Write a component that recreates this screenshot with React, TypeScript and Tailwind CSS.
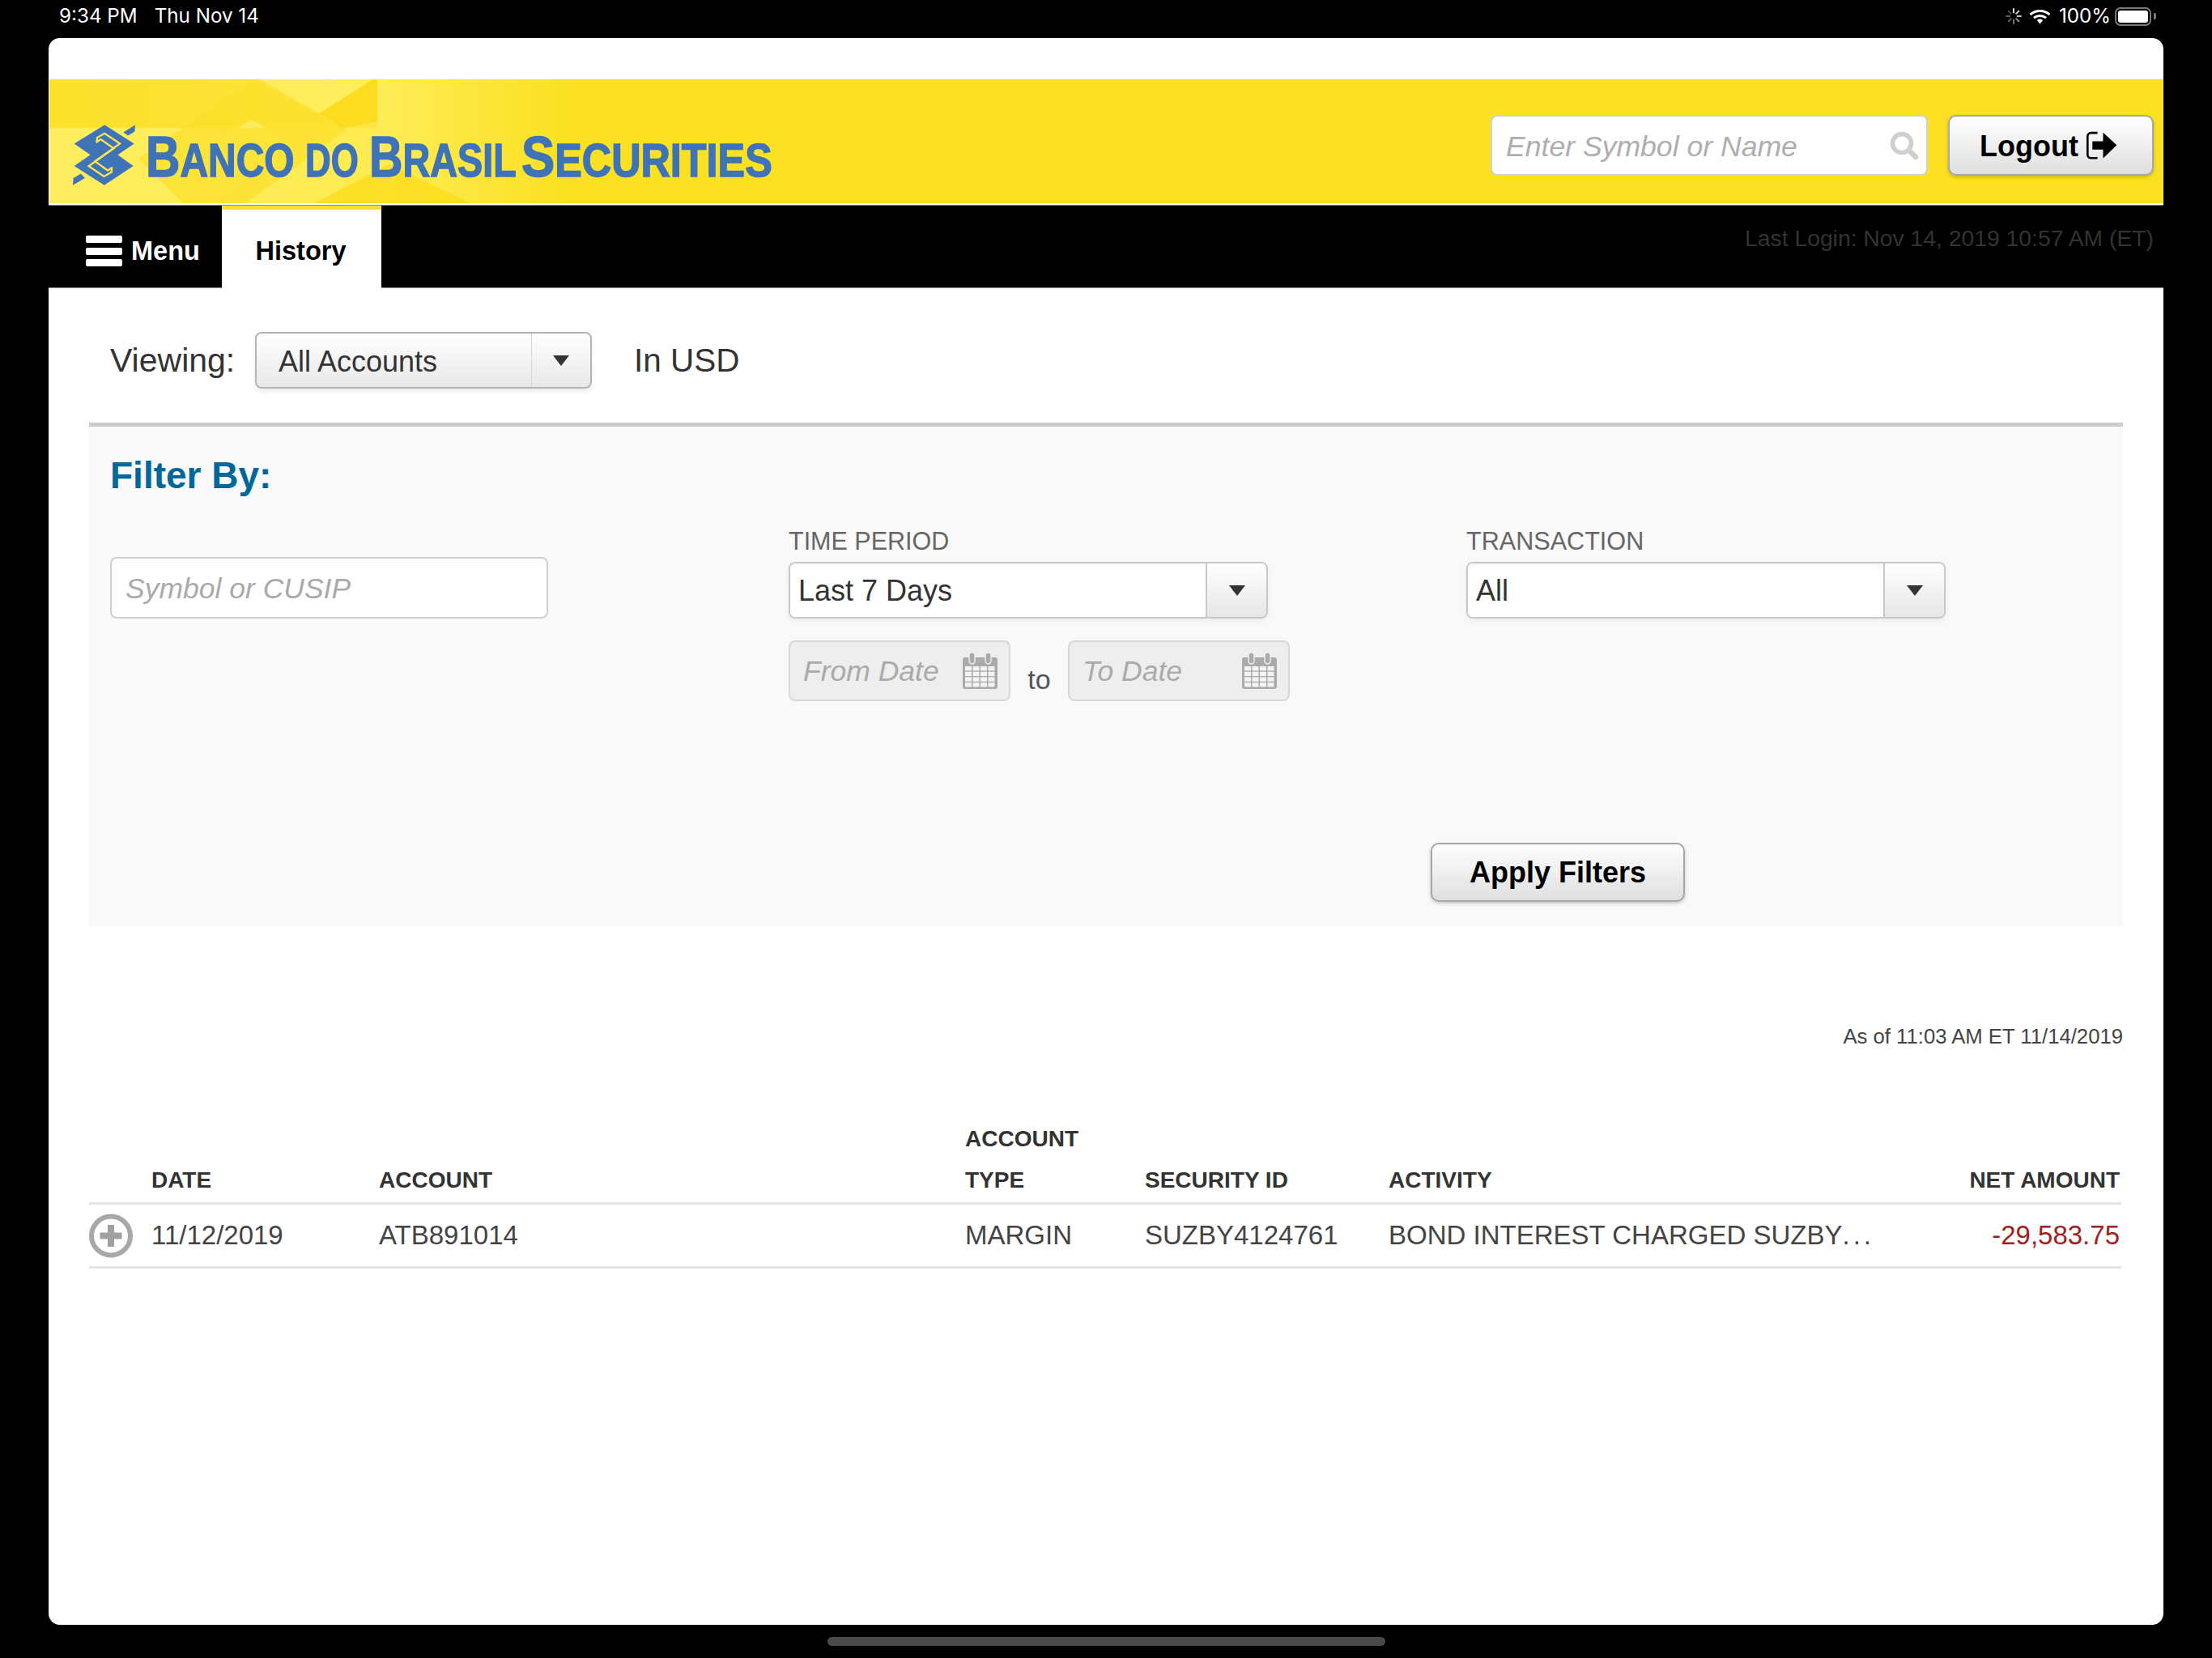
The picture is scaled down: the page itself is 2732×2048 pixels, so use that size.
import React from "react";

const Arrow = () => (
  <svg width="20" height="13" viewBox="0 0 20 13" className="block"><path d="M0 0H20L10 13Z" fill="#333" /></svg>
);

const Calendar = () => (
  <svg width="43" height="46" viewBox="0 0 43 46" className="block">
    <path d="M3 6H40a3 3 0 0 1 3 3V42a3 3 0 0 1-3 3H3a3 3 0 0 1-3-3V9a3 3 0 0 1 3-3Z" fill="#aaa" />
    <rect x="8" y="0" width="7" height="14" rx="3.5" fill="#aaa" stroke="#eee" strokeWidth="1.5" />
    <rect x="28" y="0" width="7" height="14" rx="3.5" fill="#aaa" stroke="#eee" strokeWidth="1.5" />
    {[0, 1, 2, 3].map((r) =>
      [0, 1, 2, 3].map((c) => (
        <rect key={`${r}-${c}`} x={3 + c * 9.5} y={17 + r * 6.7} width="8" height="5.4" fill="#f2f2f2" />
      ))
    )}
  </svg>
);

const Select = ({ value, w }: { value: string; w: string }) => (
  <div className={`flex h-[70px] ${w} rounded-[8px] border-2 border-[#c8c8c8] bg-white shadow-[0_3px_6px_rgba(0,0,0,0.06)] overflow-hidden`}>
    <div className="flex-1 pl-[10px] pt-[2px] flex items-center text-[36px] text-[#333] bg-linear-to-b from-[#f8f8f8] to-white to-[12%]">{value}</div>
    <div className="w-[75px] border-l-2 border-[#c8c8c8] flex items-center justify-center bg-linear-to-b from-white to-[#e6e6e6]">
      <Arrow />
    </div>
  </div>
);

const DateBox = ({ label, w }: { label: string; w: string }) => (
  <div className={`flex items-center justify-between h-[75px] ${w} rounded-[8px] border-2 border-[#d8d8d8] bg-[#eeeeee] pl-[16px] pr-[14px]`}>
    <span className="text-[35.5px] italic text-[#aaaaaa] pt-[3px]">{label}</span>
    <Calendar />
  </div>
);

const Word = ({ w, s, big, rest }: { w: string; s: string; big: string; rest: string }) => (
  <span className={`inline-block ${w} shrink-0`}>
    <span className={`inline-block origin-left ${s} whitespace-nowrap`}>
      <span className="text-[70px]">{big}</span>
      {rest}
    </span>
  </span>
);

const Th = ({ children, right }: { children: React.ReactNode; right?: boolean }) => (
  <div className={`text-[28px] font-bold leading-[51px] text-[#333] ${right ? "text-right" : ""}`}>{children}</div>
);

export default function App() {
  return (
    <div className="w-[2732px] h-[2048px] bg-black flex flex-col font-['Liberation_Sans','Arial',sans-serif] overflow-hidden">
      {/* status bar */}
      <div className="h-[47px] shrink-0 flex items-start justify-between pl-[73px] pr-[69px] text-white font-['Inter','Liberation_Sans',sans-serif] text-[24.2px] leading-[40px]">
        <div className="flex gap-[21px]">
          <span>9:34 PM</span>
          <span>Thu Nov 14</span>
        </div>
        <div className="flex items-center h-[40px]">
          <svg width="20" height="20" viewBox="0 0 20 20" className="block">
            <g stroke="#fff" strokeWidth="1.8" strokeLinecap="round">
              <path d="M10 1V5.5" opacity="1" />
              <path d="M16.4 3.6L13.2 6.8" opacity=".85" />
              <path d="M19 10H14.5" opacity=".75" />
              <path d="M16.4 16.4L13.2 13.2" opacity=".6" />
              <path d="M10 19V14.5" opacity=".5" />
              <path d="M3.6 16.4L6.8 13.2" opacity=".4" />
              <path d="M1 10H5.5" opacity=".35" />
              <path d="M3.6 3.6L6.8 6.8" opacity=".3" />
            </g>
          </svg>
          <svg width="27" height="20" viewBox="0 0 27 20" className="block ml-[9px]">
            <path d="M13.5 19.5l-3.7-4.6a6 6 0 0 1 7.4 0Z" fill="#fff" />
            <path d="M13.5 3.5A19 19 0 0 0 1.5 8" fill="none" stroke="#fff" strokeWidth="3" />
            <path d="M13.5 3.5A19 19 0 0 1 25.5 8" fill="none" stroke="#fff" strokeWidth="3" />
            <path d="M6 12.2a12 12 0 0 1 15 0" fill="none" stroke="#fff" strokeWidth="3" />
          </svg>
          <span className="ml-[10px] w-[62px]">100%</span>
          <div className="ml-[7px] w-[45px] h-[23px] rounded-[7px] border-2 border-[#7a7a7a] p-[2px]">
            <div className="w-full h-full rounded-[3px] bg-white" />
          </div>
          <div className="ml-[3px] w-[3px] h-[8px] rounded-r-[2px] bg-[#7a7a7a]" />
        </div>
      </div>

      {/* card */}
      <div className="h-[1960px] mx-[60px] shrink-0 bg-white rounded-[14px] overflow-hidden flex flex-col">
        <div className="h-[51px] shrink-0" />

        {/* banner */}
        <div className="relative h-[153px] shrink-0 ml-[1px] bg-[#fbe122] flex items-start pl-[29px] overflow-hidden">
          <svg className="absolute left-0 top-0" width="800" height="153" viewBox="0 0 800 153">
            <defs>
              <linearGradient id="low" x1="0" x2="1" y1="0" y2="0">
                <stop offset="0" stopColor="#fff06a" stopOpacity=".85" />
                <stop offset="1" stopColor="#fff06a" stopOpacity=".65" />
              </linearGradient>
              <linearGradient id="right" x1="0" x2="1" y1="0" y2="0">
                <stop offset="0" stopColor="#fff06a" stopOpacity=".75" />
                <stop offset="1" stopColor="#fff06a" stopOpacity="0" />
              </linearGradient>
              <linearGradient id="top" x1="0" x2="1" y1="0" y2="0">
                <stop offset="0" stopColor="#fce02a" />
                <stop offset="1" stopColor="#fde53f" />
              </linearGradient>
            </defs>
            <rect x="0" y="0" width="405" height="60" fill="url(#top)" />
            <rect x="0" y="60" width="405" height="93" fill="url(#low)" />
            <rect x="405" y="0" width="230" height="153" fill="url(#right)" />
            <path d="M260 0H400L333 42Z" fill="#fff06a" opacity=".75" />
            <path d="M400 0H405V52L363 60 333 42Z" fill="#fbdb1c" opacity=".85" />
            <path d="M250 0L110 98 165 153H243L367 62Z" fill="#fcdf2a" opacity=".7" />
            <path d="M250 50L170 100 215 140 300 88Z" fill="#fde43e" opacity=".6" />
            <path d="M250 50L232 60H268Z" fill="#fdeb66" opacity=".9" />
            <path d="M327 153L420 105 520 153Z" fill="#fcdc18" opacity=".75" />
          </svg>

          <svg width="77" height="77" viewBox="30 30 232 225" className="relative block mt-[55px] shrink-0 blur-[0.4px]">
            <path d="M35 100L148 30 258 100 197 142 255 183 147 255 35 183 95 142Z" fill="#3f74b9" />
            <path d="M262 30L218 58 235 70 260 55Z" fill="#3f74b9" />
            <path d="M30 255L75 228 60 212 32 228Z" fill="#3f74b9" />
            <path d="M120 96V78L148 62 205 100 112 166 160 200 178 188" fill="none" stroke="#fde74a" strokeWidth="7" />
            <path d="M174 189V206L146 222 89 184 182 118 134 84 116 96" fill="none" stroke="#fde74a" strokeWidth="7" />
          </svg>

          <div className="relative flex mt-[61px] ml-[13px] text-[57px] leading-[70px] font-bold text-[#3f73b8] blur-[0.5px] [-webkit-text-stroke:1.5px_#3f73b8]">
            <Word w="w-[197px]" s="scale-x-[0.84]" big="B" rest="ANCO" />
            <Word w="w-[79px]" s="scale-x-[0.77]" big="" rest="DO" />
            <Word w="w-[188px]" s="scale-x-[0.82]" big="B" rest="RASIL" />
            <Word w="w-[310px]" s="scale-x-[0.883]" big="S" rest="ECURITIES" />
          </div>

          <div className="relative ml-auto mt-[44px] flex gap-[25px] mr-[12px]">
            <div className="w-[540px] h-[75px] rounded-[8px] border-2 border-[#d0d0d0] bg-white flex items-center justify-between pl-[17px] pr-[9px]">
              <span className="text-[35.6px] italic text-[#aeaeae] pt-[4px]">Enter Symbol or Name</span>
              <svg width="36" height="36" viewBox="0 0 36 36" className="block">
                <circle cx="15" cy="15" r="11.5" fill="none" stroke="#cfcfcf" strokeWidth="5.5" />
                <path d="M23.5 23.5L32 32" stroke="#cfcfcf" strokeWidth="6.5" strokeLinecap="round" />
              </svg>
            </div>
            <div className="w-[254px] h-[75px] rounded-[10px] border-2 border-[#a6a6a6] bg-linear-to-b from-white to-[#dfdfdf] flex items-center pl-[37px] gap-[7px] text-[36px] font-bold text-black shadow-[0_2px_4px_rgba(0,0,0,0.2)]">
              <span className="pt-[3px]">Logout</span>
              <svg width="43" height="36" viewBox="315 45 130 108" className="block">
                <path d="M365 51H341a13 13 0 0 0-13 13V132a13 13 0 0 0 13 13H365" fill="none" stroke="#000" strokeWidth="8" />
                <path d="M346 82H386V50L437 97 386 146V113H346Z" fill="#000" />
              </svg>
            </div>
          </div>
        </div>

        <div className="h-[2px] bg-white shrink-0" />
        <div className="h-[1px] bg-[#888] shrink-0" />

        {/* nav */}
        <div className="h-[102px] shrink-0 bg-black border-b border-[#999] flex text-[32.5px] font-bold">
          <div className="w-[214px] pl-[46px] flex items-center gap-[11px] text-white pt-[11px]">
            <div className="flex flex-col gap-[5.5px] w-[45px]">
              <div className="h-[9px] rounded-[2px] bg-white" />
              <div className="h-[9px] rounded-[2px] bg-white" />
              <div className="h-[9px] rounded-[2px] bg-white" />
            </div>
            <span>Menu</span>
          </div>
          <div className="w-[197px] h-[102px] bg-white flex flex-col text-black">
            <div className="h-[5px] bg-[#fbe122]" />
            <div className="flex-1 flex items-center justify-center pt-[6px] pr-[2px]">History</div>
          </div>
          <div className="flex-1 flex justify-end pr-[12px] pt-[22px] text-[28.3px] font-normal leading-[36px] text-[#333]">
            Last Login: Nov 14, 2019 10:57 AM (ET)
          </div>
        </div>

        {/* body */}
        <div className="px-[50px] flex flex-col text-[#333]">
          <div className="h-[166px] pl-[26px] flex items-start pt-[54px]">
            <span className="text-[41px] leading-[70px] w-[179px]">Viewing:</span>
            <div className="relative w-[416px] h-[70px] rounded-[8px] border-2 border-[#b4b4b4] bg-linear-to-b from-white to-[#e8e8e8] flex shadow-[0_4px_6px_rgba(0,0,0,0.08)]">
              <div className="w-[340px] pl-[27px] pt-[3px] flex items-center text-[36px] border-r border-[#d6d6d6]">All Accounts</div>
              <div className="flex-1 flex items-center justify-center"><Arrow /></div>
            </div>
            <span className="ml-[52px] text-[40.5px] leading-[70px]">In USD</span>
          </div>

          {/* filter panel */}
          <div className="border-t-[5px] border-[#cccccc] bg-[#f9f9f9] px-[26px] pt-[30px] pb-[30px]">
            <div className="text-[46px] leading-[60px] font-bold text-[#00679b]">Filter By:</div>
            <div className="grid grid-cols-[838px_837px_1fr] mt-[33px]">
              <div className="pt-[38px]">
                <div className="w-[541px] h-[76px] rounded-[8px] border-2 border-[#d0d0d0] bg-white flex items-center pl-[17px]">
                  <span className="text-[35.5px] italic text-[#aaaaaa] pt-[3px]">Symbol or CUSIP</span>
                </div>
              </div>
              <div>
                <div className="h-[44px] leading-[36px] text-[30.5px] text-[#666]">TIME PERIOD</div>
                <Select value="Last 7 Days" w="w-[592px]" />
                <div className="flex mt-[27px]">
                  <DateBox label="From Date" w="w-[274px]" />
                  <div className="w-[71px] pt-[23px] text-center text-[34px] leading-[50px] text-[#555]">to</div>
                  <DateBox label="To Date" w="w-[274px]" />
                </div>
              </div>
              <div>
                <div className="h-[44px] leading-[36px] text-[30.6px] text-[#666]">TRANSACTION</div>
                <Select value="All" w="w-[592px]" />
              </div>
            </div>
            <div className="ml-[1631px] mt-[175px] w-[314px] h-[73px] rounded-[10px] border-2 border-[#a6a6a6] bg-linear-to-b from-white to-[#dfdfdf] flex items-center justify-center text-[36px] font-bold text-black shadow-[0_2px_4px_rgba(0,0,0,0.2)]">
              Apply Filters
            </div>
          </div>

          <div className="mt-[118px] text-right text-[25.7px] leading-[36px] text-[#444]">As of 11:03 AM ET 11/14/2019</div>

          {/* table */}
          <div className="mt-[83px] w-[2510px]">
            <div className="grid grid-cols-[77px_281px_724px_222px_301px_1fr] items-end pr-[2px] pb-[2px] border-b-[3px] border-[#e5e5e5]">
              <div />
              <Th>DATE</Th>
              <Th>ACCOUNT</Th>
              <Th>ACCOUNT<br />TYPE</Th>
              <Th>SECURITY ID</Th>
              <div className="flex justify-between">
                <Th>ACTIVITY</Th>
                <Th right>NET AMOUNT</Th>
              </div>
            </div>
            <div className="grid grid-cols-[77px_281px_724px_222px_301px_1fr] items-center h-[79px] pr-[2px] border-b-[3px] border-[#e5e5e5] text-[33px] text-[#444]">
              <svg width="54" height="55" viewBox="0 0 54 55" className="block">
                <circle cx="27" cy="27.5" r="24" fill="#fff" stroke="#a8a8a8" strokeWidth="6" />
                <path d="M23 14H31V23.5H40.5V31.5H31V41H23V31.5H13.5V23.5H23Z" fill="#a0a0a0" />
              </svg>
              <div>11/12/2019</div>
              <div>ATB891014</div>
              <div>MARGIN</div>
              <div>SUZBY4124761</div>
              <div className="flex justify-between">
                <span>BOND INTEREST CHARGED SUZBY<span className="tracking-[4px]">...</span></span>
                <span className="text-[#a32020]">-29,583.75</span>
              </div>
            </div>
          </div>
        </div>
      </div>

      {/* home indicator */}
      <div className="flex-1 flex items-start justify-center pt-[15px]">
        <div className="w-[689px] h-[11px] rounded-full bg-[#4a4a4a]" />
      </div>
    </div>
  );
}
